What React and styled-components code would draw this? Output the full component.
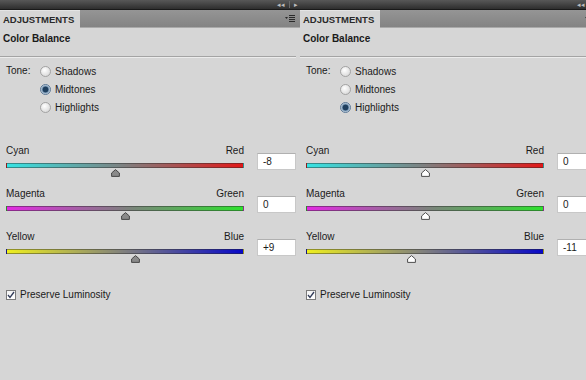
import React from "react";
import styled, { createGlobalStyle } from "styled-components";

const GlobalStyle = createGlobalStyle`
  html, body {
    margin: 0;
    padding: 0;
    background: #d6d6d6;
  }
  body {
    font-family: "Liberation Sans", Arial, sans-serif;
    font-size: 10px;
    color: #1a1a1a;
  }
`;

const Screen = styled.div`
  width: 586px;
  height: 380px;
  overflow: hidden;
  display: flex;
  background: #d6d6d6;
`;

const Panel = styled.div`
  flex: 0 0 300px;
  width: 300px;
  display: flex;
  flex-direction: column;
`;

const TopBar = styled.div`
  height: 9px;
  background: linear-gradient(#585858, #2e2e2e);
  border-bottom: 1px solid #1a1a1a;
  display: flex;
  justify-content: flex-end;
`;

const BarControls = styled.div`
  width: 23px;
  display: flex;
  align-items: center;
  gap: 4px;
  color: #bdbdbd;
  font-size: 7px;
  line-height: 9px;
`;

const BarDivider = styled.span`
  width: 1px;
  height: 7px;
  background: #6a6a6a;
`;

const TabRow = styled.div`
  height: 17px;
  display: flex;
  align-items: stretch;
  background: linear-gradient(#959595, #838383);
  border-bottom: 1px solid #a9a9a9;
`;

const Tab = styled.div`
  width: 77px;
  padding-left: 3px;
  background: #d6d6d6;
  border-top: 1px solid #e4e4e4;
  font-size: 9.5px;
  font-weight: bold;
  color: #2a2a2a;
  display: flex;
  align-items: center;
  margin-bottom: -1px;
`;

const TabFill = styled.div`
  flex: 1;
  display: flex;
  align-items: center;
  justify-content: flex-end;
  padding-right: 5px;
`;

const Body = styled.div`
  display: flex;
  flex-direction: column;
  padding-top: 3px;
`;

const Title = styled.div`
  font-weight: bold;
  font-size: 10px;
  padding-left: 3px;
  height: 16px;
  line-height: 16px;
`;

const Separator = styled.div`
  margin: 9px 4px 0 0;
  height: 1px;
  background: #a4a4a4;
  border-bottom: 1px solid #ececec;
`;

const ToneRow = styled.div`
  display: flex;
  padding: 5px 0 0 6px;
`;

const ToneLabel = styled.div`
  width: 34px;
  line-height: 16px;
`;

const RadioList = styled.div`
  display: flex;
  flex-direction: column;
  gap: 2px;
`;

const RadioItem = styled.div`
  display: flex;
  align-items: center;
  height: 16px;
  gap: 4px;
`;

const RadioDot = styled.span`
  width: 11px;
  height: 11px;
  border-radius: 50%;
  border: 1px solid ${(p) => (p.checked ? "#5b7896" : "#a3a3a3")};
  background: ${(p) =>
    p.checked
      ? "radial-gradient(circle, #1f3f5e 0 2.6px, #6e8fae 3.2px, #e8eef4 5px)"
      : "radial-gradient(circle at 40% 35%, #ffffff, #dedede 70%, #cfcfcf)"};
  box-sizing: border-box;
`;

const Sliders = styled.div`
  display: flex;
  flex-direction: column;
  padding: 29px 0 0 6px;
  gap: 9px;
`;

const SliderRow = styled.div`
  display: flex;
  align-items: flex-start;
`;

const SliderBlock = styled.div`
  width: 238px;
  display: flex;
  flex-direction: column;
`;

const Ends = styled.div`
  display: flex;
  justify-content: space-between;
  height: 14px;
  line-height: 14px;
`;

const Track = styled.div`
  margin-top: 5px;
  height: 5px;
  box-sizing: border-box;
  border: 1px solid rgba(40, 40, 40, 0.45);
  background: linear-gradient(to right, ${(p) => p.from}, #7f7f7f 50%, ${(p) => p.to});
`;

const ThumbLane = styled.div`
  position: relative;
  height: 10px;
`;

const Thumb = styled.svg`
  position: absolute;
  top: 1px;
  width: 9px;
  height: 8px;
  margin-left: -4.5px;
`;

const Amount = styled.div`
  margin: 9px 0 0 13px;
  width: 32px;
  height: 15px;
  background: #ffffff;
  border: 1px solid #c8c8c8;
  border-top-color: #b0b0b0;
  padding-left: 5px;
  line-height: 15px;
  font-size: 10px;
`;

const CheckRow = styled.div`
  display: flex;
  align-items: center;
  gap: 4px;
  padding: 25px 0 0 6px;
`;

const CheckBox = styled.span`
  width: 10px;
  height: 10px;
  box-sizing: border-box;
  border: 1px solid #7a7a7a;
  background: linear-gradient(#f4f4f4, #ffffff);
  display: flex;
  align-items: center;
  justify-content: center;
`;

const MenuIcon = () => (
  <svg width="10" height="7" viewBox="0 0 10 7">
    <path d="M0 2 L3 2 L1.5 4 Z" fill="#2a2a2a" />
    <rect x="4" y="0" width="6" height="1" fill="#2a2a2a" />
    <rect x="4" y="2" width="6" height="1" fill="#2a2a2a" />
    <rect x="4" y="4" width="6" height="1" fill="#2a2a2a" />
    <rect x="4" y="6" width="6" height="1" fill="#2a2a2a" />
  </svg>
);

const sliders = [
  { left: "Cyan", right: "Red", from: "#35e3e3", to: "#e21818" },
  { left: "Magenta", right: "Green", from: "#e22ae2", to: "#2ee22e" },
  { left: "Yellow", right: "Blue", from: "#eeee1e", to: "#0808c8" },
];

const Slider = ({ def, value, light }) => {
  const pct = 50 + value / 2;
  return (
    <SliderRow>
      <SliderBlock>
        <Ends>
          <span>{def.left}</span>
          <span>{def.right}</span>
        </Ends>
        <Track from={def.from} to={def.to} />
        <ThumbLane>
          <Thumb viewBox="0 0 9 8" style={{ left: `${pct}%` }}>
            <path
              d="M4.5 0.6 L8.4 4 L8.4 7.4 L0.6 7.4 L0.6 4 Z"
              fill={light ? "#ffffff" : "#8a8a8a"}
              stroke="#3c3c3c"
              strokeWidth="0.9"
              strokeLinejoin="round"
            />
          </Thumb>
        </ThumbLane>
      </SliderBlock>
      <Amount>{value > 0 ? `+${value}` : value}</Amount>
    </SliderRow>
  );
};

const tones = ["Shadows", "Midtones", "Highlights"];

const AdjustPanel = ({ tone, values, light, leftEdge }) => (
  <Panel>
    <TopBar>
      <BarControls>
        <span>◂◂</span>
        {leftEdge && (
          <>
            <BarDivider />
            <span>▸</span>
          </>
        )}
      </BarControls>
    </TopBar>
    <TabRow>
      <Tab>ADJUSTMENTS</Tab>
      <TabFill>
        <MenuIcon />
      </TabFill>
    </TabRow>
    <Body>
      <Title>Color Balance</Title>
      <Separator />
      <ToneRow>
        <ToneLabel>Tone:</ToneLabel>
        <RadioList>
          {tones.map((t) => (
            <RadioItem key={t}>
              <RadioDot checked={t === tone} />
              <span>{t}</span>
            </RadioItem>
          ))}
        </RadioList>
      </ToneRow>
      <Sliders>
        {sliders.map((s, i) => (
          <Slider key={s.left} def={s} value={values[i]} light={light} />
        ))}
      </Sliders>
      <CheckRow>
        <CheckBox>
          <svg width="8" height="8" viewBox="0 0 8 8">
            <path d="M1 4 L3 6.5 L7 1" fill="none" stroke="#303a58" strokeWidth="1.3" />
          </svg>
        </CheckBox>
        <span>Preserve Luminosity</span>
      </CheckRow>
    </Body>
  </Panel>
);

const App = () => (
  <>
    <GlobalStyle />
    <Screen>
      <AdjustPanel tone="Midtones" values={[-8, 0, 9]} leftEdge />
      <AdjustPanel tone="Highlights" values={[0, 0, -11]} light />
    </Screen>
  </>
);

export default App;
